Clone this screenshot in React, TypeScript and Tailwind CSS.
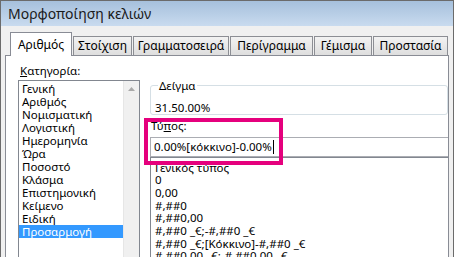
import React from 'react'

const tabs = [
  { label: 'Αριθμός', w: 'w-[62px]' },
  { label: 'Στοίχιση', w: 'w-[59px]' },
  { label: 'Γραμματοσειρά', w: 'w-[96px]' },
  { label: 'Περίγραμμα', w: 'w-[83px]' },
  { label: 'Γέμισμα', w: 'w-[58px]' },
  { label: 'Προστασία', w: 'w-[75px]' },
]

const categories = [
  'Γενική',
  'Αριθμός',
  'Νομισματική',
  'Λογιστική',
  'Ημερομηνία',
  'Ώρα',
  'Ποσοστό',
  'Κλάσμα',
  'Επιστημονική',
  'Κείμενο',
  'Ειδική',
  'Προσαρμογή',
]

const formats = [
  'Γενικός τύπος',
  '0',
  '0,00',
  '#,##0',
  '#,##0,00',
  '#,##0 _€;-#,##0 _€',
  '#,##0 _€;[Κόκκινο]-#,##0 _€',
  '#,##0,00 _€;-#,##0,00 _€',
]

export default function App() {
  return (
    <div
      className="relative w-[454px] h-[257px] overflow-hidden bg-[#f0f0f0] border-l border-t border-r border-[#6b6b6b] text-[11.5px] text-black"
      style={{ fontFamily: '"Noto Sans", "DejaVu Sans", sans-serif' }}
    >
      {/* Title bar */}
      <div className="h-[25px] flex items-center pl-[7px] bg-gradient-to-b from-[#a6c0dc] to-[#c9dbef] text-[14px] text-[#1a1a1a]">
        Μορφοποίηση κελιών
      </div>

      {/* Body */}
      <div className="px-[4px]">
        {/* Tabs */}
        <div className="h-[29px] flex items-end pl-[5px] gap-[1px]">
          {tabs.map((t, i) =>
            i === 0 ? (
              <div
                key={t.label}
                className={`${t.w} h-[24px] -mb-px relative z-10 bg-white border border-b-0 border-[#898c95] flex items-center justify-center text-[12px]`}
              >
                {t.label}
              </div>
            ) : (
              <div
                key={t.label}
                className={`${t.w} h-[19px] bg-gradient-to-b from-[#f2f2f2] to-[#dedede] border border-b-0 border-[#8c8e94] flex items-center justify-center text-[12px]`}
              >
                {t.label}
              </div>
            )
          )}
        </div>

        {/* Panel */}
        <div className="h-[210px] bg-white border border-[#898c95] flex pl-[12px] gap-[10px]">
          {/* Category column */}
          <div className="w-[122px] flex flex-col pt-[8px]">
            <div className="h-[13px] leading-[13px] pl-[2px] mb-[3px]">
              <span className="underline">Κ</span>ατηγορία:
            </div>
            <div className="flex-1 flex border border-[#828790]">
              <div className="flex-1 flex flex-col pt-[1px]">
                {categories.map((c) => (
                  <div
                    key={c}
                    className={`h-[13px] leading-[13px] pl-[3px] ${
                      c === 'Προσαρμογή' ? 'bg-[#3399ff] text-white' : ''
                    }`}
                  >
                    {c}
                  </div>
                ))}
              </div>
              <div className="w-[16px] bg-[#f0f0f0] border-l border-[#e6e6e6] flex justify-center pt-[6px]">
                <svg width="7" height="4" viewBox="0 0 7 4">
                  <path d="M0 4 L3.5 0 L7 4 Z" fill="#a9a9a9" />
                </svg>
              </div>
            </div>
          </div>

          {/* Format column */}
          <div className="flex-1 flex flex-col pt-[23px]">
            <fieldset className="h-[38px] border border-[#d5dfe5] rounded-[3px] pl-[4px]">
              <legend className="ml-[3px] px-[1px] h-[13px] leading-[13px]">Δείγμα</legend>
              <div className="h-[13px] leading-[13px] mt-[9px]">31.50.00%</div>
            </fieldset>
            <div className="h-[13px] leading-[13px] pl-[1px] mt-[4px]">
              Τύ<span className="underline">π</span>ος:
            </div>
            <div className="h-[21px] mt-[5px] border border-[#abadb3] border-r-0 flex items-center pl-[3px]">
              <span>0.00%[κόκκινο]-0.00%</span>
              <span className="w-px h-[14px] bg-black ml-[1px]" />
            </div>
            <div className="flex-1 border border-[#828790] border-r-0 flex flex-col pt-[4px] pl-[4px]">
              {formats.map((f) => (
                <div key={f} className="h-[12.7px] leading-[12.7px] whitespace-nowrap">
                  {f}
                </div>
              ))}
            </div>
          </div>
        </div>
      </div>

      {/* Highlight annotation */}
      <div className="absolute left-[143px] top-[117px] w-[139px] h-[47px] border-4 border-[#e5007d]" />
    </div>
  )
}
